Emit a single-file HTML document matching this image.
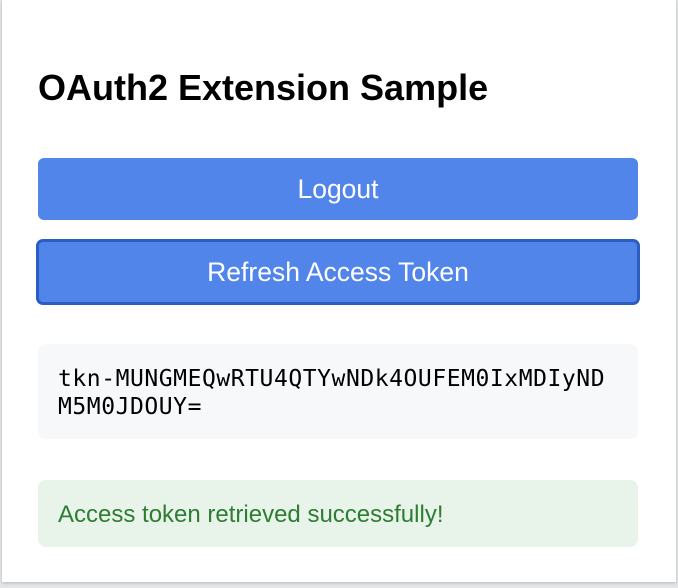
<!DOCTYPE html>
<html><head><style>
html,body{margin:0;padding:0;}
body{width:678px;height:588px;background:#e4e5e6;position:relative;overflow:hidden;font-family:"Liberation Sans",Arial,sans-serif;}
.panel{position:absolute;left:2px;top:0;width:674px;height:582px;background:#fff;box-shadow:0 1px 3px rgba(0,0,0,.2);}
h1{position:absolute;left:38px;top:67px;margin:0;font-size:36px;font-weight:bold;color:#000;line-height:42px;letter-spacing:0;}
.btn{position:absolute;box-sizing:border-box;background:#5185ea;color:#fff;font-size:26.5px;text-align:center;border-radius:6px;}
.b1{left:38px;top:158px;width:600px;height:62px;line-height:62px;}
.b2{left:36px;top:239px;width:604px;height:66px;line-height:60px;border:3px solid #2b5dc7;border-radius:7px;}
.tok{position:absolute;left:38px;top:344px;width:600px;height:95px;box-sizing:border-box;background:#f7f8fa;border-radius:8px;padding:21px 20px;font-family:"DejaVu Sans Mono","Liberation Mono",monospace;font-size:23px;line-height:28px;color:#000;letter-spacing:0.55px;white-space:nowrap;}
.ok{position:absolute;left:38px;top:480px;width:600px;height:67px;box-sizing:border-box;background:#e8f3e9;border-radius:8px;padding:0 20px;line-height:70px;font-size:24px;color:#2e7d32;}
</style></head><body>
<div class="panel"></div>
<h1>OAuth2 Extension Sample</h1>
<div class="btn b1">Logout</div>
<div class="btn b2">Refresh Access Token</div>
<div class="tok">tkn-MUNGMEQwRTU4QTYwNDk4OUFEM0IxMDIyND<br>M5M0JDOUY=</div>
<div class="ok">Access token retrieved successfully!</div>
</body></html>
